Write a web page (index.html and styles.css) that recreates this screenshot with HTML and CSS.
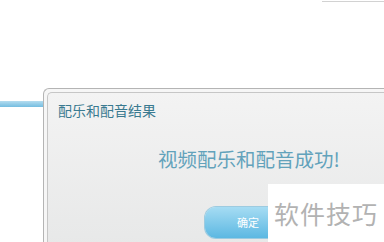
FILE: index.html
```html
<!DOCTYPE html>
<html lang="zh">
<head>
<meta charset="utf-8">
<link rel="stylesheet" href="styles.css">
</head>
<body>
<div class="page">
  <div class="topline"></div>
  <div class="stage">
    <div class="bar"></div>
    <div class="dialog">
      <div class="inner">
        <div class="title">配乐和配音结果</div>
        <div class="message">视频配乐和配音成功!</div>
        <div class="button">确定</div>
      </div>
    </div>
  </div>
  <div class="watermark">软件技巧</div>
</div>
</body>
</html>
```
FILE: styles.css
```css
html, body {
  margin: 0;
  padding: 0;
  background: #ffffff;
}
.page {
  position: relative;
  width: 384px;
  height: 242px;
  overflow: hidden;
  font-family: "Noto Sans CJK SC", "Noto Sans", sans-serif;
}
.topline {
  margin: 1px 0 0 322px;
  height: 1px;
  background: #d2d2d2;
}
.stage {
  display: flex;
  align-items: flex-start;
  margin-top: 86px;
}
.bar {
  width: 43px;
  height: 6px;
  margin-top: 13px;
  flex: none;
  background: linear-gradient(#b4dcef, #74bde0);
}
.dialog {
  flex: 1;
  height: 170px;
  border: 1px solid #b4b4b4;
  border-right: none;
  border-bottom: none;
  border-radius: 6px 0 0 0;
  padding: 3px 0 0 3px;
  background: #f6f6f6;
}
.inner {
  height: 100%;
  border: 1px solid #c6c6c6;
  border-right: none;
  border-bottom: none;
  border-radius: 5px 0 0 0;
  background: linear-gradient(#f3f3f3, #e6e7e7);
  box-sizing: border-box;
  padding: 8px 0 0 10px;
}
.title {
  font-size: 14px;
  line-height: 18px;
  color: #3a7a90;
}
.message {
  margin: 28px 0 0 100px;
  font-size: 19.5px;
  line-height: 24px;
  color: #62a2bb;
}
.button {
  margin: 36px 0 0 147px;
  width: 86px;
  height: 31px;
  border-radius: 11px;
  background: linear-gradient(#a6dcf3, #5cb8e2);
  box-shadow: 0 0 0 1px #9dcbe0;
  color: #ffffff;
  font-size: 11px;
  line-height: 31px;
  text-align: center;
}
.watermark {
  position: absolute;
  left: 268px;
  top: 184px;
  width: 116px;
  height: 58px;
  background: #ffffff;
  color: #b2b2b2;
  font-size: 25px;
  line-height: 58px;
  padding-left: 6px;
  box-sizing: border-box;
  letter-spacing: 1px;
  white-space: nowrap;
}
```
